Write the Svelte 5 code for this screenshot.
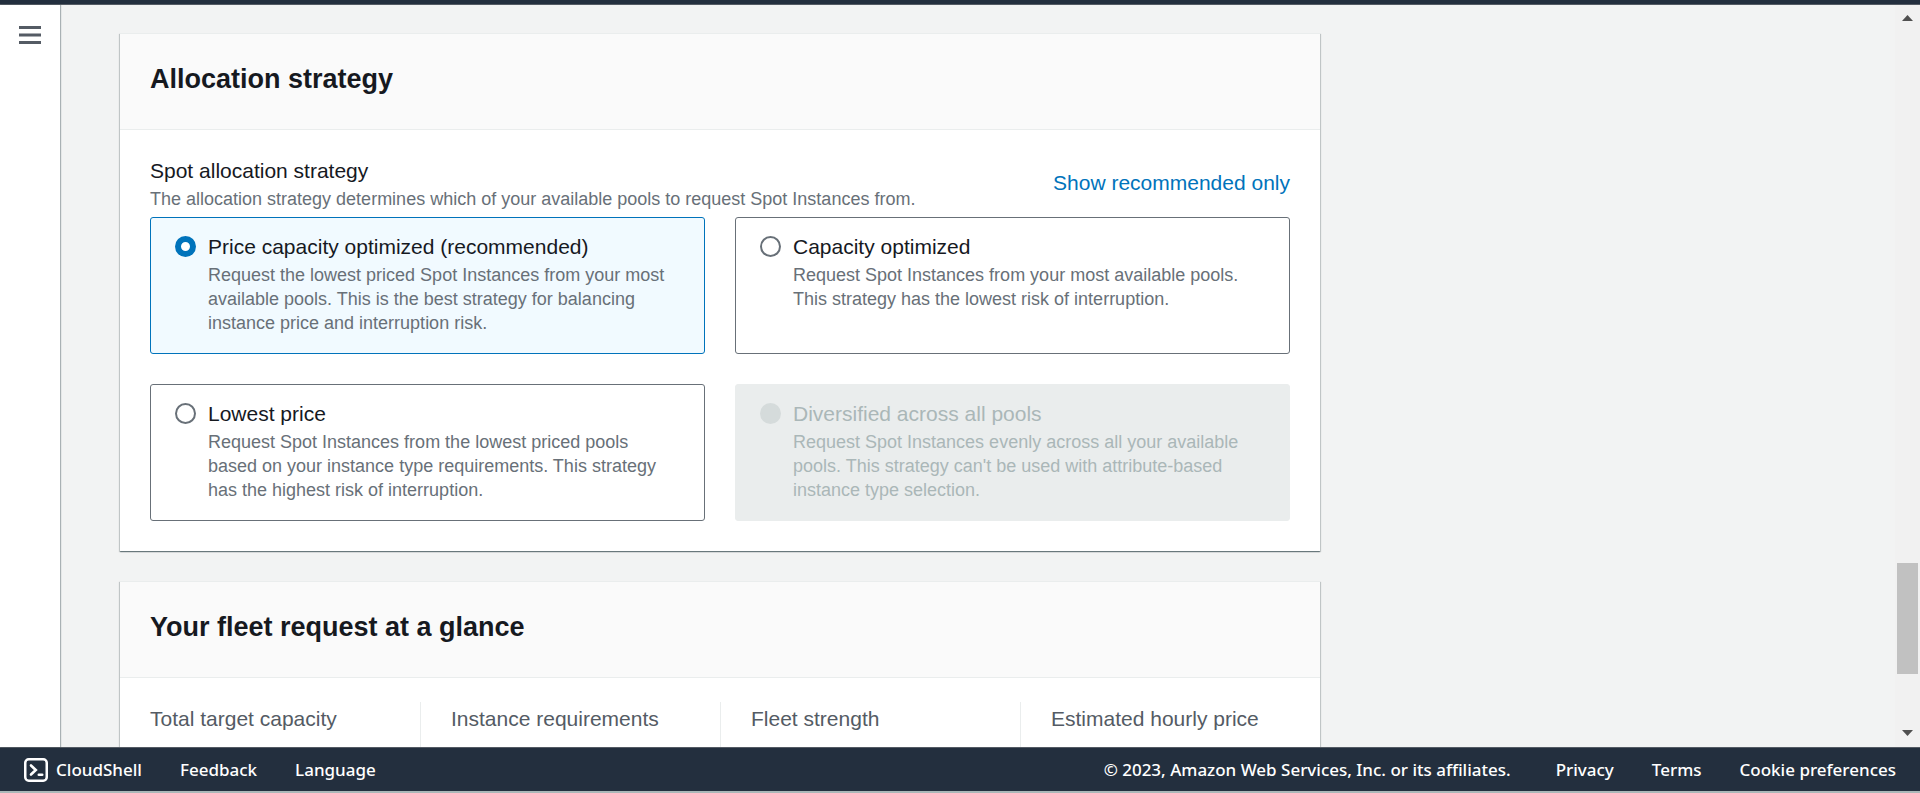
<script>
  const strategies = [
    {
      id: 'price-capacity',
      label: 'Price capacity optimized (recommended)',
      text: 'Request the lowest priced Spot Instances from your most available pools. This is the best strategy for balancing instance price and interruption risk.'
    },
    {
      id: 'capacity',
      label: 'Capacity optimized',
      text: 'Request Spot Instances from your most available pools. This strategy has the lowest risk of interruption.'
    },
    {
      id: 'lowest-price',
      label: 'Lowest price',
      text: 'Request Spot Instances from the lowest priced pools based on your instance type requirements. This strategy has the highest risk of interruption.'
    },
    {
      id: 'diversified',
      label: 'Diversified across all pools',
      text: "Request Spot Instances evenly across all your available pools. This strategy can't be used with attribute-based instance type selection.",
      disabled: true
    }
  ];
  const stats = ['Total target capacity', 'Instance requirements', 'Fleet strength', 'Estimated hourly price'];

  let selected = $state('price-capacity');
</script>

<div class="shell">
  <header class="topbar"></header>

  <div class="workspace">
    <nav class="rail">
      <button class="menu" type="button" aria-label="Open navigation">
        <svg width="22" height="18" viewBox="0 0 22 18" aria-hidden="true">
          <path d="M0 1.5h22M0 9h22M0 16.5h22" stroke="#545b64" stroke-width="3" />
        </svg>
      </button>
    </nav>

    <main>
      <section class="panel">
        <div class="panel-head"><h2>Allocation strategy</h2></div>
        <div class="panel-body">
          <div class="field-head">
            <div>
              <div class="field-label" id="strategy-label">Spot allocation strategy</div>
              <div class="hint">The allocation strategy determines which of your available pools to request Spot Instances from.</div>
            </div>
            <button class="link" type="button">Show recommended only</button>
          </div>

          <div class="tiles" role="radiogroup" aria-labelledby="strategy-label">
            {#each strategies as s (s.id)}
              <label class="tile" class:selected={selected === s.id} class:disabled={s.disabled} for={s.id}>
                <input type="radio" name="strategy" id={s.id} value={s.id} disabled={s.disabled} bind:group={selected} />
                <span class="tile-text">
                  <span class="tile-label">{s.label}</span>
                  <span class="hint">{s.text}</span>
                </span>
              </label>
            {/each}
          </div>
        </div>
      </section>

      <section class="panel">
        <div class="panel-head"><h2>Your fleet request at a glance</h2></div>
        <div class="stats">
          {#each stats as name}
            <div class="stat">{name}</div>
          {/each}
        </div>
      </section>
    </main>

    <div class="scrollbar" aria-hidden="true">
      <svg class="arrow" width="11" height="6" viewBox="0 0 11 6"><path d="M0 6L5.5 0L11 6z" fill="#505050" /></svg>
      <div class="before"></div>
      <div class="thumb"></div>
      <div class="after"></div>
      <svg class="arrow" width="11" height="6" viewBox="0 0 11 6"><path d="M0 0L5.5 6L11 0z" fill="#505050" /></svg>
    </div>
  </div>

  <footer>
    <div class="group">
      <button class="foot-item" type="button">
        <svg width="24" height="24" viewBox="0 0 24 24" fill="none" stroke="#fff" aria-hidden="true">
          <rect x="1.25" y="1.25" width="21.5" height="21.5" rx="3.5" stroke-width="2.5" />
          <path d="M7 7.5L11.8 12L7 16.5" stroke-width="2.6" stroke-linecap="round" />
          <path d="M14.8 16.8h3.4" stroke-width="2.6" stroke-linecap="round" />
        </svg>
        CloudShell
      </button>
      <a class="foot-item" href="#feedback">Feedback</a>
      <button class="foot-item" type="button">Language</button>
    </div>
    <div class="group">
      <span class="copyright">© 2023, Amazon Web Services, Inc. or its affiliates.</span>
      <a class="foot-item" href="#privacy">Privacy</a>
      <a class="foot-item" href="#terms">Terms</a>
      <a class="foot-item" href="#cookies">Cookie preferences</a>
    </div>
  </footer>
</div>

<style>
  :global(body) {
    margin: 0;
    background: #f2f3f3;
  }
  .shell,
  .shell * {
    box-sizing: border-box;
  }
  .shell {
    height: 100vh;
    display: flex;
    flex-direction: column;
    overflow: hidden;
    font-family: 'Liberation Sans', Arial, sans-serif;
    font-size: 21px;
    line-height: 33px;
    color: #16191f;
  }
  button {
    font: inherit;
    border: 0;
    padding: 0;
    background: none;
    cursor: pointer;
  }
  .topbar {
    flex: none;
    height: 5px;
    background: #232f3e;
    border-bottom: 1px solid #545b64;
  }
  .workspace {
    flex: 1;
    min-height: 0;
    display: flex;
  }
  .rail {
    position: relative;
    flex: none;
    display: flex;
    justify-content: center;
    align-items: flex-start;
    width: 60px;
    padding-top: 21px;
    background: #fff;
    box-shadow: 1px 0 1px 0 rgba(0, 28, 36, 0.3);
  }
  .menu {
    display: flex;
  }
  main {
    flex: 1;
    min-width: 0;
    overflow: hidden;
    padding: 28px 60px 0;
    background: #f2f3f3;
    display: flex;
    flex-direction: column;
    gap: 30px;
  }
  .panel {
    flex: none;
    max-width: 1200px;
    background: #fff;
    border-top: 1px solid #eaeded;
    box-shadow:
      0 1px 1px 0 rgba(0, 28, 36, 0.4),
      1px 1px 1px 0 rgba(0, 28, 36, 0.15),
      -1px 1px 1px 0 rgba(0, 28, 36, 0.15);
  }
  .panel-head {
    background: #fafafa;
    border-bottom: 1px solid #eaeded;
    padding: 27px 30px 32px;
  }
  h2 {
    margin: 0;
    font-size: 27px;
    line-height: 36px;
    font-weight: 700;
  }
  .panel-body {
    padding: 24px 30px 30px;
  }
  .field-head {
    display: flex;
    justify-content: space-between;
    align-items: center;
    gap: 30px;
    padding-bottom: 6px;
  }
  .link {
    color: #0073bb;
    white-space: nowrap;
  }
  .hint {
    display: block;
    font-size: 18px;
    line-height: 24px;
    color: #687078;
  }
  .tiles {
    display: grid;
    grid-template-columns: 1fr 1fr;
    gap: 30px;
  }
  .tile {
    display: flex;
    gap: 12px;
    padding: 12px 24px 18px;
    border: 1px solid #687078;
    border-radius: 3px;
    cursor: pointer;
  }
  .tile.selected {
    background: #f1faff;
    border-color: #0073bb;
  }
  .tile.disabled {
    background: #eaeded;
    border-color: #eaeded;
    color: #aab7b8;
    cursor: default;
  }
  .tile.disabled .hint {
    color: #aab7b8;
  }
  .tile-label {
    display: block;
  }
  input[type='radio'] {
    appearance: none;
    flex: none;
    width: 21px;
    height: 21px;
    margin: 6px 0;
    border: 2px solid #687078;
    border-radius: 50%;
    background: #fff;
  }
  input[type='radio']:checked {
    border: 6px solid #0073bb;
  }
  input[type='radio']:disabled {
    border-color: #d5dbdb;
    background: #d5dbdb;
  }
  .stats {
    display: grid;
    grid-template-columns: repeat(4, 1fr);
    padding: 24px 0 30px;
  }
  .stat {
    padding: 0 30px 66px;
    color: #545b64;
  }
  .stat + .stat {
    border-left: 1px solid #eaeded;
  }
  .scrollbar {
    flex: none;
    width: 25px;
    background: #f1f1f1;
    display: flex;
    flex-direction: column;
    align-items: center;
    padding: 10px 0 11px;
  }
  .arrow {
    flex: none;
  }
  .before {
    flex: 542;
  }
  .thumb {
    flex: 111;
    width: 21px;
    background: #c1c1c1;
  }
  .after {
    flex: 56;
  }
  footer {
    flex: none;
    display: flex;
    justify-content: space-between;
    align-items: center;
    height: 46px;
    padding: 0 24px;
    background: #232f3e;
    border-top: 1px solid #545b64;
    border-bottom: 2px solid #aab7b8;
    font-family: 'Noto Sans', 'Open Sans', sans-serif;
    font-size: 17px;
    font-weight: 500;
    line-height: 24px;
    color: #fff;
  }
  .group {
    display: flex;
    align-items: center;
    gap: 38px;
    white-space: nowrap;
  }
  .foot-item {
    display: inline-flex;
    align-items: center;
    gap: 8px;
    color: #fff;
    text-decoration: none;
  }
  .copyright {
    margin-right: 7px;
  }
</style>
